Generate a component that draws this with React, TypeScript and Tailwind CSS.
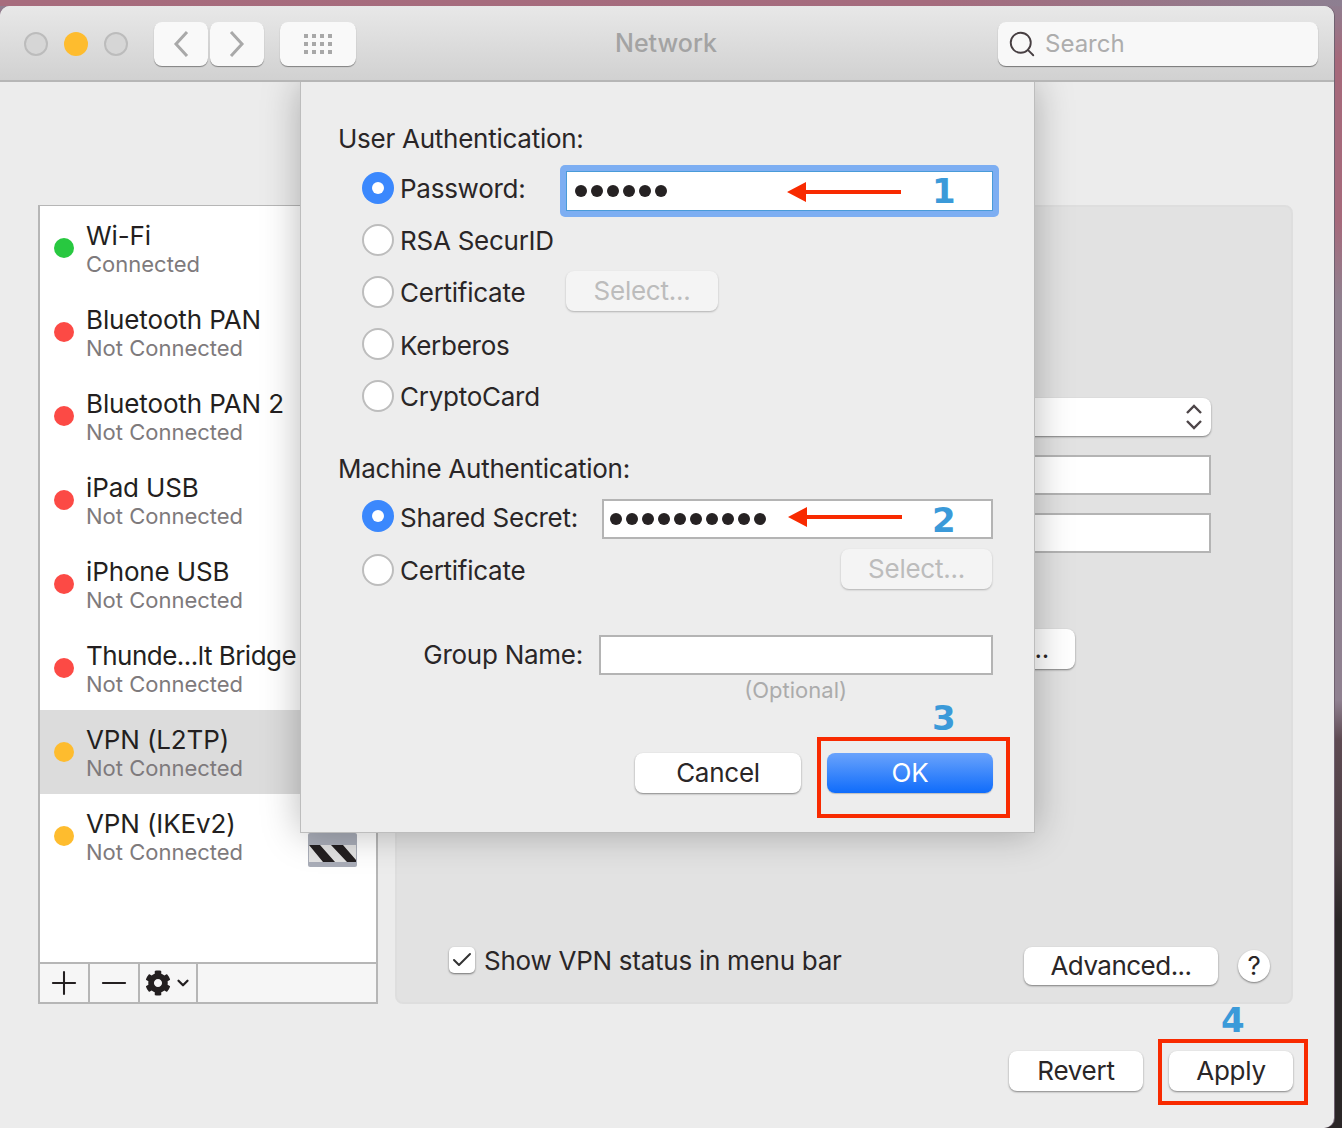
import React from "react";
import { Search, Plus, Minus, ChevronDown, Check } from "lucide-react";
import { FaCog } from "react-icons/fa";

const services = [
  { name: "Wi-Fi", status: "Connected", dot: "bg-[#28c840]" },
  { name: "Bluetooth PAN", status: "Not Connected", dot: "bg-[#fc4a45]" },
  { name: "Bluetooth PAN 2", status: "Not Connected", dot: "bg-[#fc4a45]" },
  { name: "iPad USB", status: "Not Connected", dot: "bg-[#fc4a45]" },
  { name: "iPhone USB", status: "Not Connected", dot: "bg-[#fc4a45]" },
  { name: "Thunde...lt Bridge", status: "Not Connected", dot: "bg-[#fc4a45]", tight: true },
  { name: "VPN (L2TP)", status: "Not Connected", dot: "bg-[#febc2e]", selected: true },
  { name: "VPN (IKEv2)", status: "Not Connected", dot: "bg-[#febc2e]", lock: true },
];

const MacButton = ({ className, children }: { className: string; children: React.ReactNode }) => (
  <button className={`flex items-center justify-center rounded-[8px] bg-white text-[26px] leading-none tracking-[-0.01em] text-[#2a2627] shadow-[0_1px_2px_rgba(0,0,0,0.45)] ${className}`}>
    {children}
  </button>
);

const Radio = ({ checked }: { checked?: boolean }) =>
  checked ? (
    <span className="flex h-[32px] w-[32px] shrink-0 items-center justify-center rounded-full bg-[#3b88fd]">
      <span className="h-[12px] w-[12px] rounded-full bg-white" />
    </span>
  ) : (
    <span className="h-[32px] w-[32px] shrink-0 rounded-full border-2 border-[#bdbdbd] bg-white" />
  );

const Dots = ({ count }: { count: number }) => (
  <span className="flex gap-[4px]">
    {Array.from({ length: count }).map((_, i) => (
      <span key={i} className="h-[12px] w-[12px] rounded-full bg-[#262223]" />
    ))}
  </span>
);

const DisabledSelect = ({ className }: { className: string }) => (
  <button className={`flex h-[40px] items-center justify-center rounded-[8px] bg-[#f4f4f4] text-[26px] leading-none text-[#bcbcbc] shadow-[0_1px_2px_rgba(0,0,0,0.25)] ${className}`}>
    Select...
  </button>
);

// red arrow used by the annotations
const Arrow = ({ className }: { className: string }) => (
  <svg className={`absolute ${className}`} width="114" height="20" viewBox="0 0 114 20">
    <path d="M0 10 L19 0 L19 8 L114 8 L114 12 L19 12 L19 20 Z" fill="#f82a00" />
  </svg>
);

const StepNumber = ({ className, children }: { className: string; children: React.ReactNode }) => (
  <span className={`absolute font-['DejaVu_Sans',sans-serif] text-[34px] leading-none font-bold text-[#3b9ad9] ${className}`}>
    {children}
  </span>
);

const NavChevron = ({ d }: { d: string }) => (
  <svg width="16" height="26" viewBox="0 0 16 26" fill="none" stroke="#a9a9a9" strokeWidth="3">
    <path d={d} />
  </svg>
);

const LockIcon = () => (
  <svg width="49" height="48" viewBox="0 0 49 48" className="mr-[19px] mb-[11px] ml-auto shrink-0 self-end">
    <rect x="4" y="0" width="6" height="16" fill="#8e8e8e" />
    <rect x="39" y="0" width="6" height="16" fill="#8e8e8e" />
    <rect x="0" y="14" width="49" height="34" rx="2" fill="#a9adb8" />
    <rect x="1" y="26" width="47" height="17" fill="#e2e2e2" />
    <path d="M1 26 H12 L27 43 H15 Z M23 26 H35 L48 41 V43 H39 Z" fill="#231f20" />
  </svg>
);

export default function App() {
  return (
    <div className="relative h-[1128px] w-[1342px] overflow-hidden bg-[linear-gradient(180deg,#8d7f91_0,#a6697b_60px,#a6697b_220px,#90808f_300px,#8f8090_700px,#5e4a52_740px,#4a3d42_850px,#2b2627_920px)] pt-[6px] font-['Inter',sans-serif]">
      <div className="absolute top-0 left-0 h-[6px] w-full bg-[linear-gradient(90deg,#a76c7d,#a56c7e_70%,#8d7f91)]" />
      <div className="relative h-[1122px] w-[1334px] overflow-hidden rounded-t-[10px] rounded-br-[10px] bg-[#ececec] shadow-[1px_0_0_#6f6170]">
        {/* titlebar */}
        <div className="relative z-20 flex h-[76px] items-center border-b-2 border-[#b6b6b6] bg-[linear-gradient(180deg,#e8e8e8,#d1d1d1)] pt-[1px] pl-[24px]">
          <span className="h-[24px] w-[24px] rounded-full border-2 border-[#bcbcbc] bg-[#d6d6d6]" />
          <span className="ml-[16px] h-[24px] w-[24px] rounded-full bg-[#febc2e]" />
          <span className="ml-[16px] h-[24px] w-[24px] rounded-full border-2 border-[#bcbcbc] bg-[#d6d6d6]" />
          <button className="ml-[26px] flex h-[44px] w-[54px] items-center justify-center rounded-[8px] bg-[#f9f9f9] shadow-[0_1px_1px_rgba(0,0,0,0.4)]">
            <NavChevron d="M14 1 L3 13 L14 25" />
          </button>
          <button className="ml-[2px] flex h-[44px] w-[54px] items-center justify-center rounded-[8px] bg-[#f9f9f9] shadow-[0_1px_1px_rgba(0,0,0,0.4)]">
            <NavChevron d="M2 1 L13 13 L2 25" />
          </button>
          <button className="ml-[16px] flex h-[44px] w-[76px] items-center justify-center rounded-[8px] bg-[#f9f9f9] shadow-[0_1px_1px_rgba(0,0,0,0.4)]">
            <span className="grid grid-cols-4 gap-x-[4px] gap-y-[4px]">
              {Array.from({ length: 12 }).map((_, i) => (
                <span key={i} className="h-[4px] w-[4px] bg-[#a8a8a8]" />
              ))}
            </span>
          </button>
          <span className="absolute left-[615px] text-[25px] leading-none font-medium text-[#a3a3a3]">Network</span>
          <div className="mr-[16px] ml-auto flex h-[44px] w-[320px] items-center rounded-[8px] bg-[#f8f8f8] pl-[9px] shadow-[0_1px_1px_rgba(0,0,0,0.45)]">
            <Search size={30} strokeWidth={1.5} className="text-[#473f42]" />
            <span className="ml-[8px] text-[24px] leading-none text-[#adadad]">Search</span>
          </div>
        </div>

        {/* main area */}
        <div className="flex gap-[17px] pt-[123px] pr-[41px] pl-[38px]">
          <div className="flex h-[799px] w-[340px] flex-col border-2 border-t-[1px] border-[#b6b6b6] bg-white">
            <div className="flex-1">
              {services.map((s) => (
                <div key={s.name} className={`flex h-[84px] items-center pl-[14px] ${s.selected ? "bg-[#dcdcdc]" : ""}`}>
                  <span className={`h-[20px] w-[20px] shrink-0 rounded-full ${s.dot}`} />
                  <div className="mt-[4px] ml-[12px] whitespace-nowrap">
                    <div className={`text-[26px] leading-[29px] text-[#231f20] ${s.tight ? "tracking-[-0.02em]" : "tracking-[-0.005em]"}`}>{s.name}</div>
                    <div className="text-[22px] leading-[29px] text-[#7e7a7c]">{s.status}</div>
                  </div>
                  {s.lock && <LockIcon />}
                </div>
              ))}
            </div>
            <div className="flex h-[40px] border-t-2 border-[#b6b6b6] bg-[#f6f6f6] text-[#231f20]">
              <span className="flex w-[50px] items-center justify-center border-r-2 border-[#b6b6b6]">
                <Plus size={38} strokeWidth={1.3} />
              </span>
              <span className="flex w-[50px] items-center justify-center border-r-2 border-[#b6b6b6]">
                <Minus size={38} strokeWidth={1.3} />
              </span>
              <span className="flex w-[58px] items-center justify-center gap-[3px] border-r-2 border-[#b6b6b6]">
                <FaCog size={26} />
                <ChevronDown size={18} strokeWidth={3} />
              </span>
            </div>
          </div>

          <div className="flex h-[799px] w-[898px] flex-col rounded-[8px] border-2 border-[#dedede] bg-[#e2e2e2] pt-[191px] pr-[80px]">
            <div className="ml-auto flex h-[38px] w-[500px] items-center justify-end rounded-[8px] bg-white pr-[8px] shadow-[0_1px_2px_rgba(0,0,0,0.45)]">
              <svg width="18" height="28" viewBox="0 0 18 28" fill="none" stroke="#4d4548" strokeWidth="2.4">
                <path d="M2 10 L9 3 L16 10 M2 18 L9 25 L16 18" />
              </svg>
            </div>
            <div className="mt-[19px] ml-auto h-[40px] w-[500px] border-2 border-[#b4b4b4] bg-white" />
            <div className="mt-[18px] ml-auto h-[40px] w-[500px] border-2 border-[#b4b4b4] bg-white" />
            <MacButton className="mt-[76px] mr-[136px] ml-auto h-[40px] w-[380px] justify-end pr-[26px]">Authentication Settings...</MacButton>
            <div className="mt-auto mb-[17px] flex h-[38px] w-[873px] items-start pl-[52px]">
              <span className="flex h-[26px] w-[26px] shrink-0 items-center justify-center rounded-[5px] bg-white shadow-[0_1px_2px_rgba(0,0,0,0.5)]">
                <Check size={24} strokeWidth={2} className="text-[#333]" />
              </span>
              <span className="mt-[1px] ml-[9px] text-[26px] leading-none tracking-[-0.01em] whitespace-nowrap text-[#2a2627]">Show VPN status in menu bar</span>
              <MacButton className="ml-auto h-[38px] w-[194px] tracking-[-0.02em]">Advanced...</MacButton>
              <MacButton className="mt-[3px] ml-[20px] h-[32px] w-[32px] shrink-0 rounded-full">?</MacButton>
            </div>
          </div>
        </div>

        {/* bottom buttons */}
        <div className="mt-[47px] flex justify-end gap-[26px] pr-[41px]">
          <MacButton className="h-[40px] w-[134px]">Revert</MacButton>
          <MacButton className="h-[40px] w-[124px]">Apply</MacButton>
        </div>

        {/* authentication sheet */}
        <div className="absolute top-[76px] left-[300px] z-10 h-[751px] w-[735px] border-x border-b border-[#bdbdbd] bg-[#ededed] pt-[44px] pr-[41px] pl-[37px] text-[26px] leading-none tracking-[-0.01em] whitespace-nowrap text-[#2a2627] shadow-[0_0_36px_rgba(0,0,0,0.28)]">
          <div className="h-[26px]">User Authentication:</div>
          <div className="mt-[20px] ml-[24px] flex h-[32px] items-center">
            <Radio checked />
            <span className="mt-[2px] ml-[6px] w-[160px] shrink-0">Password:</span>
            <div className="mt-[6px] flex h-[52px] w-[439px] shrink-0 items-center rounded-[5px] bg-[#7daef2] p-[6px]">
              <div className="flex h-full w-full items-center border border-[#4a9bd8] bg-white pl-[8px]">
                <Dots count={6} />
              </div>
            </div>
          </div>
          <div className="mt-[20px] ml-[24px] flex h-[32px] items-center">
            <Radio />
            <span className="mt-[2px] ml-[6px]">RSA SecurID</span>
          </div>
          <div className="mt-[20px] ml-[24px] flex h-[32px] items-center">
            <Radio />
            <span className="mt-[2px] ml-[6px] w-[166px] shrink-0">Certificate</span>
            <DisabledSelect className="mt-[-2px] w-[152px]" />
          </div>
          <div className="mt-[20px] ml-[24px] flex h-[32px] items-center">
            <Radio />
            <span className="mt-[4px] ml-[6px]">Kerberos</span>
          </div>
          <div className="mt-[20px] ml-[24px] flex h-[32px] items-center">
            <Radio />
            <span className="mt-[2px] ml-[6px]">CryptoCard</span>
          </div>

          <div className="mt-[44px] h-[26px]">Machine Authentication:</div>
          <div className="mt-[18px] ml-[24px] flex h-[32px] items-center">
            <Radio checked />
            <span className="mt-[4px] ml-[6px] w-[202px] shrink-0">Shared Secret:</span>
            <div className="mt-[6px] flex h-[40px] w-[391px] shrink-0 items-center border-2 border-[#b4b4b4] bg-white pl-[6px]">
              <Dots count={10} />
            </div>
          </div>
          <div className="mt-[22px] ml-[24px] flex h-[32px] items-center">
            <Radio />
            <span className="mt-[2px] ml-[6px]">Certificate</span>
            <DisabledSelect className="mt-[-2px] mr-[1px] ml-auto w-[151px]" />
          </div>

          <div className="mt-[49px] flex h-[40px] items-center justify-end">
            <span>Group Name:</span>
            <div className="ml-[16px] h-[40px] w-[394px] border-2 border-[#b4b4b4] bg-white" />
          </div>
          <div className="mt-[4px] mr-[146px] text-right text-[22px] leading-[22px] tracking-normal text-[#ababab]">(Optional)</div>
          <div className="mt-[52px] flex justify-end gap-[26px]">
            <MacButton className="h-[40px] w-[166px]">Cancel</MacButton>
            <button className="flex h-[40px] w-[166px] items-center justify-center rounded-[8px] bg-[linear-gradient(180deg,#6aa3fc,#0f6cfb)] text-white shadow-[0_1px_1px_rgba(0,0,0,0.2)]">OK</button>
          </div>
        </div>
      </div>

      {/* tutorial annotations */}
      <Arrow className="top-[182px] left-[787px] z-30" />
      <Arrow className="top-[507px] left-[788px] z-30" />
      <StepNumber className="top-[174px] left-[932px] z-30">1</StepNumber>
      <StepNumber className="top-[503px] left-[932px] z-30">2</StepNumber>
      <StepNumber className="top-[701px] left-[932px] z-30">3</StepNumber>
      <StepNumber className="top-[1003px] left-[1221px] z-30">4</StepNumber>
      <div className="absolute top-[737px] left-[817px] z-30 h-[81px] w-[193px] border-4 border-[#f82a00]" />
      <div className="absolute top-[1039px] left-[1158px] z-30 h-[66px] w-[150px] border-4 border-[#f82a00]" />
    </div>
  );
}
